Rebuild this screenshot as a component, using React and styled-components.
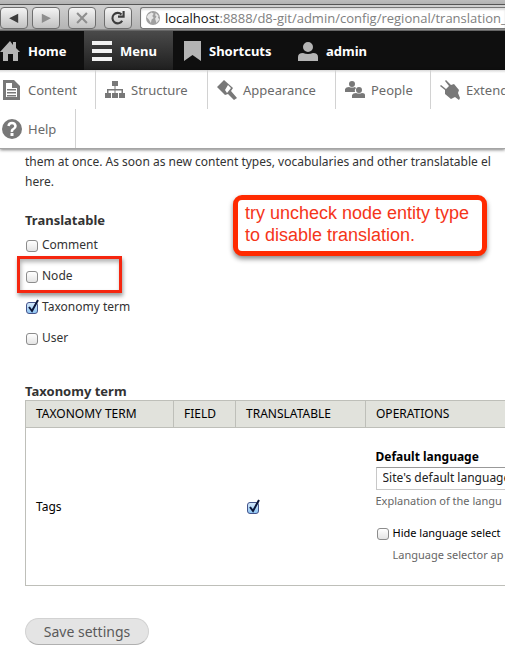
import React from 'react';
import styled, { createGlobalStyle, css } from 'styled-components';

const GlobalStyle = createGlobalStyle`
  *, *::before, *::after {
    box-sizing: border-box;
  }

  body {
    margin: 0;
    background: #fff;
    color: #333;
    font: 12px/20px "Noto Sans", "Open Sans", sans-serif;
    overflow-x: hidden;
  }
`;

/* Browser window */

const Chrome = styled.div`
  height: 31px;
  padding-top: 7px;
  display: flex;
  background: linear-gradient(#bdbdbd 0, #b2b2b2 4px, #555 4px, #555 5px, #d0d0d0 5px, #b4b4b4 29px, #666 30px);
`;

const NavButton = styled.button`
  flex: none;
  width: 28px;
  height: 22px;
  margin: 0 ${p => p.$gap}px 0 0;
  padding: 0;
  display: flex;
  align-items: center;
  justify-content: center;
  border: 1px solid #6e6e6e;
  border-radius: 4px;
  background: linear-gradient(#f4f4f4, #c2c2c2);
  color: ${p => (p.disabled ? '#8e8e8e' : '#3c3c3c')};
`;

const AddressBar = styled.div`
  flex: 1;
  min-width: 0;
  height: 22px;
  padding-left: 5px;
  display: flex;
  align-items: center;
  gap: 5px;
  border: solid #777;
  border-width: 1px 0 1px 1px;
  border-radius: 3px 0 0 3px;
  background: #fff;
  box-shadow: inset 0 2px 2px #ddd;
  white-space: nowrap;
`;

const Address = styled.div`
  flex: 1;
  min-width: 0;
  overflow: hidden;
  color: #808080;
  font: 13px/20px "Open Sans", sans-serif;

  b {
    color: #111;
    font-weight: normal;
  }
`;

/* Admin toolbar */

const Bar = styled.nav`
  height: 39px;
  display: flex;
  background: #0f0f0f;
`;

const BarTab = styled.a`
  flex: none;
  width: ${p => p.$width}px;
  padding-left: ${p => (p.$first ? 0 : 8)}px;
  display: flex;
  align-items: center;
  gap: 8px;
  color: #fff;
  font-size: 13px;
  font-weight: 700;
  text-decoration: none;
  ${p => p.$active && css`
    background: linear-gradient(#4a4a4a, #1f1f1f);
  `}
`;

const Tray = styled.nav`
  position: relative;
  display: flex;
  flex-wrap: wrap;
  border-bottom: 1px solid #a5a5a5;
  background: linear-gradient(#d8d8d8, #fff 3px);
  box-shadow: 0 1px 3px rgba(0, 0, 0, .5);
`;

const TrayLink = styled.a`
  flex: none;
  width: ${p => p.$width}px;
  height: 39px;
  padding-left: ${p => (p.$first ? 2 : 9)}px;
  display: flex;
  align-items: center;
  gap: 6px;
  border-right: 1px solid #d2d2d2;
  color: #6a6a6a;
  font-size: 13px;
  text-decoration: none;
`;

const TrayRow = styled.div`
  flex: 0 0 100%;
  min-width: 0;
  display: flex;
  overflow: hidden;
`;

/* Page */

const Page = styled.main`
  position: relative;
  padding: 3px 0 17px 25px;
  overflow: hidden;
`;

const Intro = styled.p`
  margin: 0 0 19px;
  white-space: nowrap;
`;

const Options = styled.fieldset`
  margin: 0 0 29px;
  padding: 0;
  border: 0;
`;

const Heading = styled.h2`
  margin: 0;
  font-size: 13px;
  line-height: 18px;
`;

const Legend = styled.legend`
  padding: 0;
  font-size: 13px;
  font-weight: 700;
  line-height: 18px;
`;

const Option = styled.label`
  position: relative;
  width: max-content;
  height: 31px;
  display: flex;
  align-items: center;
  gap: 3px;
`;

const Highlight = styled.span`
  position: absolute;
  top: -4px;
  left: -8px;
  width: 105px;
  height: 37px;
  border: 3px solid #f5260f;
  box-shadow: 1px 3px 4px rgba(0, 0, 0, .4), inset 1px 3px 4px rgba(0, 0, 0, .3);
  pointer-events: none;
`;

const TickBox = styled.span`
  flex: none;
  display: inline-grid;
  width: 14px;
  height: 14px;
  padding: 1px;
  vertical-align: middle;

  input, svg {
    grid-area: 1 / 1;
  }

  input {
    appearance: none;
    width: 12px;
    height: 12px;
    margin: 1px 0 0;
    border: 1px solid #8c8c8c;
    border-radius: 3px;
    background: linear-gradient(#fff, #e4e4e4);
  }

  input:checked {
    border-color: #45548c;
    background: linear-gradient(#d5e8fa, #8fc6f3);
  }

  svg {
    margin-top: -2px;
    pointer-events: none;
  }
`;

const Note = styled.div`
  position: absolute;
  top: 46px;
  left: 233px;
  width: 254px;
  padding: 2px 0 5px 7px;
  border: 5px solid #ff2a00;
  border-radius: 9px;
  background: #fff;
  box-shadow: 0 3px 5px rgba(0, 0, 0, .45);
  color: #f5351a;
  font: 18px/22px "Liberation Sans", Arial, sans-serif;
  white-space: nowrap;
`;

const Table = styled.table`
  width: 100%;
  min-width: 700px;
  border: 1px solid #bebfb9;
  border-collapse: collapse;
  table-layout: fixed;
  color: #000;

  th, td {
    padding: 0 10px;
    text-align: left;
  }

  th {
    height: 27px;
    border: 1px solid #bebfb9;
    background: #e1e2dc;
    font-weight: normal;
    text-transform: uppercase;
  }

  td {
    height: 158px;
  }
`;

const Operations = styled.div`
  display: flex;
  flex-direction: column;
  padding-bottom: 2px;
  white-space: nowrap;

  > label:first-child {
    font-weight: 700;
  }
`;

const Select = styled.select`
  appearance: none;
  width: 250px;
  height: 23px;
  margin: 0;
  padding: 0 6px;
  border: 1px solid #c8c8c8;
  border-top-color: #999;
  border-radius: 0;
  background: #fff;
  color: #222;
  font: inherit;
`;

const Description = styled.div`
  margin: ${p => (p.$indent ? '2px 0 0 17px' : '1px 0 12px')};
  color: #666;
  font-size: 11px;
`;

const HideOption = styled.label`
  display: flex;
  align-items: center;
  gap: 3px;
  font-size: 11px;
`;

const SaveButton = styled.button`
  display: block;
  width: 124px;
  height: 27px;
  margin-top: 32px;
  padding: 0;
  border: 1px solid #d2d2d2;
  border-bottom-color: #b0b0b0;
  border-radius: 14px;
  background: #e4e4e4;
  color: #5a5a5a;
  font: 14px/20px "Noto Sans", sans-serif;
`;

const IconSvg = styled.svg`
  flex: none;
`;

const Icon = ({ children, size = 20, ...rest }) => (
  <IconSvg width={size} height={size} viewBox="0 0 20 20" fill="#787878" aria-hidden="true" {...rest}>
    {children}
  </IconSvg>
);

const icons = {
  home: <path d="M10 0 0 11h3v9h5v-7h5v7h5v-9h2l-4-4V1h-3v3z" />,
  menu: <path d="M0 0h20v4H0zM0 8h20v4H0zM0 16h20v4H0z" />,
  bookmark: <path d="M3 0h17v20l-8.500-6L3 20z" />,
  user: <path d="M10 1a5 5 0 0 1 0 10 5 5 0 0 1 0-10zM0 20v-4q0-4 5-4 5 2 10 0 5 0 5 4v4z" />,
  content: <path fillRule="evenodd" d="M1 0h11l6 6v14H1zM4 3v14h11V8h-5V3zM5 9h9v1.500H5zM5 12h9v1.500H5zM5 15h9v1.500H5z" />,
  structure: <path d="M7 1h6v5h-2.500v3H18v4h2v5h-6v-5h2.500v-2.500h-6V13H13v5H7v-5h2.500v-2.500h-6V13H6v5H0v-5h2V9h7.500V6H7z" />,
  appearance: <path fillRule="evenodd" d="M7 0 0 7l8 8 3-1 6 6 3-2-6-7 2-3zM11 5l3 3-4 5-2-3z" />,
  people: <path d="M7 1a3 3 0 0 1 0 6 3 3 0 0 1 0-6zM0 12V9q1-2 4-2 3 1 6 0l1 1q-2 2-1 4zM14 7a3 3 0 0 1 0 6 3 3 0 0 1 0-6zM7 18v-3q1-2 4-2 3 1 6 0 3 0 3 2v3z" />,
  extend: <path d="m6 0 5 5 3-1 5 6-1 3 2 5-1 2-4-3-4 2-6-5v-4L0 6l1-1 5 4 3-3-4-5z" />,
  help: (
    <>
      <circle cx="10" cy="10" r="10" />
      <path d="M6.500 7q.500-3 3.500-3t3.500 3q0 2-2 3T10 13" fill="none" stroke="#fff" strokeWidth="2.500" />
      <path d="M8.500 14h3v3h-3z" fill="#fff" />
    </>
  ),
};

const tabs = [
  { name: 'Home', icon: 'home', width: 84 },
  { name: 'Menu', icon: 'menu', width: 89, active: true },
  { name: 'Shortcuts', icon: 'bookmark', width: 117 },
  { name: 'admin', icon: 'user', width: 100 },
];

const trayLinks = [
  { name: 'Content', icon: 'content', width: 96 },
  { name: 'Structure', icon: 'structure', width: 112 },
  { name: 'Appearance', icon: 'appearance', width: 128 },
  { name: 'People', icon: 'people', width: 95 },
  { name: 'Extend', icon: 'extend', width: 95 },
];

const Checkbox = ({ checked, ...rest }) => (
  <TickBox>
    <input type="checkbox" defaultChecked={checked} {...rest} />
    {checked && (
      <svg width="14" height="14" viewBox="0 0 14 14" fill="none" stroke="#0c1538" strokeWidth="2" aria-hidden="true">
        <path d="M3 8l3 4 6-11" />
      </svg>
    )}
  </TickBox>
);

function Browser() {
  return (
    <Chrome>
      <NavButton $gap={4} aria-label="Back">
        <Icon size={14} fill="currentColor"><path d="M16 4v13L3 10.500z" /></Icon>
      </NavButton>
      <NavButton $gap={8} aria-label="Forward" disabled>
        <Icon size={14} fill="currentColor"><path d="M4 4v13l13-6.500z" /></Icon>
      </NavButton>
      <NavButton $gap={8} aria-label="Stop" disabled>
        <Icon size={14} fill="none" stroke="currentColor" strokeWidth="3"><path d="m3 3 14 14M17 3 3 17" /></Icon>
      </NavButton>
      <NavButton $gap={8} aria-label="Reload">
        <Icon size={14} fill="none" stroke="currentColor" strokeWidth="3">
          <path d="M16 14a7.500 7.500 0 1 1-1-9M18 0v8h-8" />
        </Icon>
      </NavButton>
      <AddressBar>
        <Icon size={14} fill="#a0a0a0">
          <circle cx="10" cy="10" r="10" />
          <path d="m3 5 5-3 3 2-2 3 2 3-3 2-1 5-3-5-3-3zM14 3l4 4-1 2 2 3-4 5-2-6 2-3-2-2z" fill="#e6e6e6" />
        </Icon>
        <Address><b>localhost</b>:8888/d8-git/admin/config/regional/translation_</Address>
      </AddressBar>
    </Chrome>
  );
}

function Toolbar() {
  return (
    <header>
      <Bar>
        {tabs.map((tab, i) => (
          <BarTab key={tab.name} href="#" $width={tab.width} $active={tab.active} $first={i === 0}>
            <Icon fill={tab.active ? '#f2f2f2' : '#b4b4b4'}>{icons[tab.icon]}</Icon>
            {tab.name}
          </BarTab>
        ))}
      </Bar>
      <Tray>
        <TrayRow>
          {trayLinks.map((link, i) => (
            <TrayLink key={link.name} href="#" $width={link.width} $first={i === 0}>
              <Icon>{icons[link.icon]}</Icon>
              {link.name}
            </TrayLink>
          ))}
        </TrayRow>
        <TrayRow>
          <TrayLink href="#" $width={76} $first>
            <Icon>{icons.help}</Icon>
            Help
          </TrayLink>
        </TrayRow>
      </Tray>
    </header>
  );
}

export default function App() {
  return (
    <>
      <GlobalStyle />
      <Browser />
      <Toolbar />
      <Page>
        <Intro>
          them at once. As soon as new content types, vocabularies and other translatable el
          <br />
          here.
        </Intro>
        <Options>
          <Legend>Translatable</Legend>
          <Option><Checkbox />Comment</Option>
          <Option><Checkbox />Node<Highlight /></Option>
          <Option><Checkbox checked />Taxonomy term</Option>
          <Option><Checkbox />User</Option>
        </Options>
        <Note>try uncheck node entity type<br />to disable translation.</Note>

        <Heading>Taxonomy term</Heading>
        <Table>
          <colgroup>
            <col width="148" />
            <col width="62" />
            <col width="130" />
            <col />
          </colgroup>
          <thead>
            <tr>
              <th>Taxonomy term</th>
              <th>Field</th>
              <th>Translatable</th>
              <th>Operations</th>
            </tr>
          </thead>
          <tbody>
            <tr>
              <td>Tags</td>
              <td />
              <td><Checkbox checked aria-label="Translate tags" /></td>
              <td>
                <Operations>
                  <label htmlFor="default-language">Default language</label>
                  <Select id="default-language">
                    <option>Site's default language</option>
                  </Select>
                  <Description>Explanation of the langu</Description>
                  <HideOption><Checkbox />Hide language select</HideOption>
                  <Description $indent>Language selector ap</Description>
                </Operations>
              </td>
            </tr>
          </tbody>
        </Table>
        <SaveButton type="button">Save settings</SaveButton>
      </Page>
    </>
  );
}
